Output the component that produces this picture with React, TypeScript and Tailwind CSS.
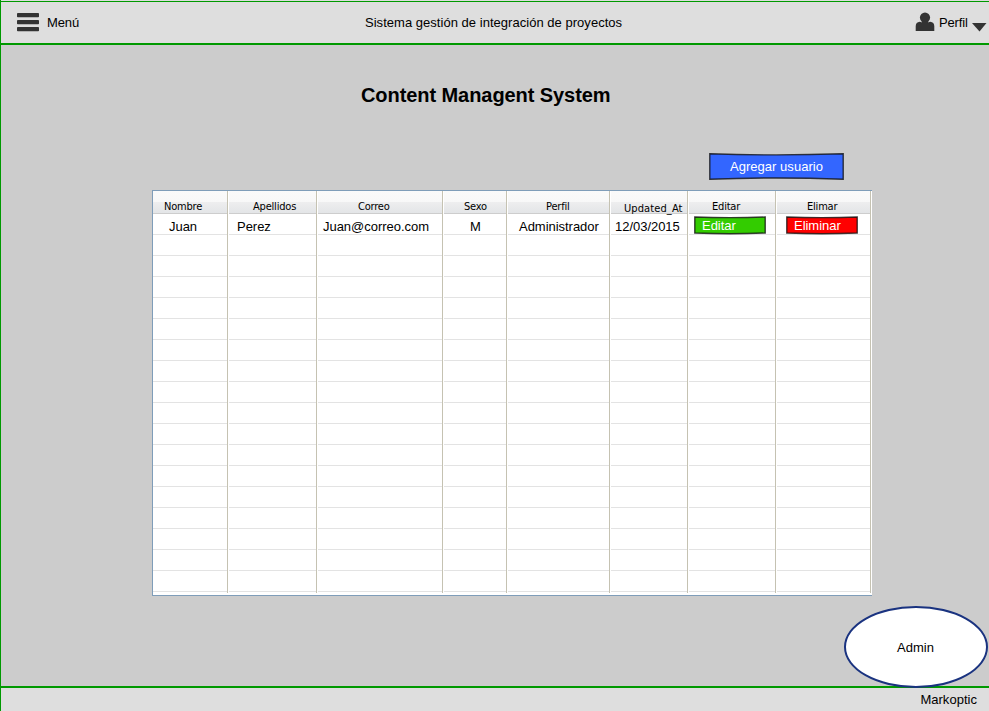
import type { ReactNode } from "react";

type Column = {
  title: string;
  width: string;
  titlePos: string;
  cell: ReactNode;
};

const ROWS = Array.from({ length: 17 }, (_, i) => i);

function SketchButton({ label, color, width, height, shape, text }: { label: string; color: string; width: number; height: number; shape: string; text: string }) {
  return (
    <button className="relative block text-left text-white" style={{ width, height }}>
      <svg className="absolute inset-0" width={width} height={height}>
        <path d={shape} fill={color} stroke="#111" strokeOpacity="0.8" strokeWidth="1.4" />
      </svg>
      <span className={"relative block whitespace-nowrap " + text}>{label}</span>
    </button>
  );
}

const SMALL = "M.8 1 Q36 2.2 71.2 1 V17 Q36 18.6 .8 17Z";

const columns: Column[] = [
  { title: "Nombre", width: "w-[75px]", titlePos: "pl-[11px] pt-[8px]", cell: <span className="pl-[16px]">Juan</span> },
  { title: "Apellidos", width: "w-[89px]", titlePos: "pl-[24px] pt-[8px]", cell: <span className="pl-[9px]">Perez</span> },
  { title: "Correo", width: "w-[126px]", titlePos: "pl-[40px] pt-[8px]", cell: <span className="pl-[6px]">Juan@correo.com</span> },
  { title: "Sexo", width: "w-[64px]", titlePos: "pl-[20px] pt-[8px]", cell: <span className="pl-[27px]">M</span> },
  { title: "Perfil", width: "w-[103px]", titlePos: "pl-[38px] pt-[8px]", cell: <span className="pl-[12px]">Administrador</span> },
  { title: "Updated_At", width: "w-[78px]", titlePos: "pl-[13px] pt-[10px] tracking-[0.1px]", cell: <span className="pl-[5px]">12/03/2015</span> },
  {
    title: "Editar",
    width: "w-[88px]",
    titlePos: "pl-[23px] pt-[8px]",
    cell: (
      <div className="-ml-px pl-[6px] pt-[2px]">
        <SketchButton label="Editar" color="#33cc00" width={72} height={19} shape={SMALL} text="pl-[8px] leading-[19px]" />
      </div>
    ),
  },
  {
    title: "Elimar",
    width: "w-[95px]",
    titlePos: "pl-[30px] pt-[8px]",
    cell: (
      <div className="-ml-px pl-[10px] pt-[2px]">
        <SketchButton label="Eliminar" color="#ff0000" width={72} height={19} shape={SMALL} text="pl-[8px] leading-[19px]" />
      </div>
    ),
  },
];

function Header() {
  return (
    <header className="flex h-[43px] shrink-0 items-start border-b-2 border-[#009900] bg-[#dedede]">
      <svg className="ml-[16px] mt-[11px] shrink-0" width="22" height="19" fill="#333">
        <rect y="0" width="22" height="4.2" rx="0.8" />
        <rect y="7" width="22" height="4.2" rx="0.8" />
        <rect y="14" width="22" height="4.2" rx="0.8" />
      </svg>
      <span className="ml-[8px] mt-[11px] w-[318px] leading-[20px] tracking-[-0.1px]">Menú</span>
      <span className="mt-[11px] w-[550px] whitespace-nowrap leading-[20px]">Sistema gestión de integración de proyectos</span>
      <svg className="mt-[10px] shrink-0" width="20" height="20" fill="#333">
        <ellipse cx="10" cy="5.6" rx="5.1" ry="5.2" />
        <path d="M.7 19V14.3Q.7 10.2 4.8 9.8Q10 11.6 15.2 9.8Q19.3 10.2 19.3 14.3V19Z" />
        <rect x="7" y="8" width="6" height="4" />
      </svg>
      <span className="ml-[4px] mt-[11px] w-[33px] leading-[20px] tracking-[-0.15px]">Perfil</span>
      <svg className="mt-[21px] shrink-0" width="15" height="9" fill="#333">
        <path d="M0 0H14.5L7.5 8.6Z" />
      </svg>
    </header>
  );
}

function UserTable() {
  return (
    <div className="ml-[151px] mt-[10px] flex h-[406px] w-[720px] border-b border-l border-t border-[#7f9db9] bg-white">
      {columns.map((c, i) => (
        <div key={c.title} className={"h-[402px] shrink-0 border-r border-[#c5c2b2] " + c.width}>
          <div
            className={
              "h-[23px] whitespace-nowrap border-b border-[#cdcdcd] bg-[linear-gradient(#fafafa_0,#f8f8f8_48%,#eeeeef_50%,#e3e5e7_100%)] font-['DejaVu_Sans_Condensed','DejaVu_Sans',sans-serif] text-[11px] leading-[15px] " +
              (i === 5 ? "" : "tracking-[-0.2px] ") + (i ? "ml-px " : "") + c.titlePos
            }
          >
            {c.title}
          </div>
          <div className={"flex h-[21px] items-start whitespace-nowrap border-b border-[#e3e3e3] leading-[26px] tracking-[-0.03px] " + (i ? "ml-px -indent-px" : "")}>{c.cell}</div>
          {ROWS.map((r) => (
            <div key={r} className={"h-[21px] border-b border-[#e3e3e3] " + (i ? "ml-px" : "")} />
          ))}
        </div>
      ))}
    </div>
  );
}

export default function App() {
  return (
    <div className="h-[711px] w-[989px] overflow-hidden bg-[#dedede] font-['Liberation_Sans',Arial,sans-serif] text-[13px] tracking-[0.03px] text-black">
      <div className="flex h-full flex-col border-l border-[#009900] pt-px">
        <div className="h-px shrink-0 bg-[#009900]" />
        <Header />
        <main className="relative h-[641px] shrink-0 bg-[#cccccc]">
          <h1 className="ml-[360px] pt-[38px] text-[20px] font-bold leading-[24px] tracking-[-0.07px]">Content Managent System</h1>
          <div className="ml-[708px] mt-[46px]">
            <SketchButton label="Agregar usuario" color="#3366ff" width={135} height={27} shape="M.8 .8 Q67 3 134.2 .8 V26.2 Q67 23.8 .8 26.2Z" text="pl-[21px] leading-[24px]" />
          </div>
          <UserTable />
          <div className="absolute left-[843px] top-[561px] z-10 flex h-[82px] w-[144px] items-center justify-center rounded-[50%] border-2 border-[#1a3380] bg-white pr-px pt-[2px]">Admin</div>
        </main>
        <footer className="flex h-[25px] shrink-0 justify-end border-t-2 border-[#009900] bg-[#dedede] pr-[12px] leading-[23px]">Markoptic</footer>
      </div>
    </div>
  );
}
